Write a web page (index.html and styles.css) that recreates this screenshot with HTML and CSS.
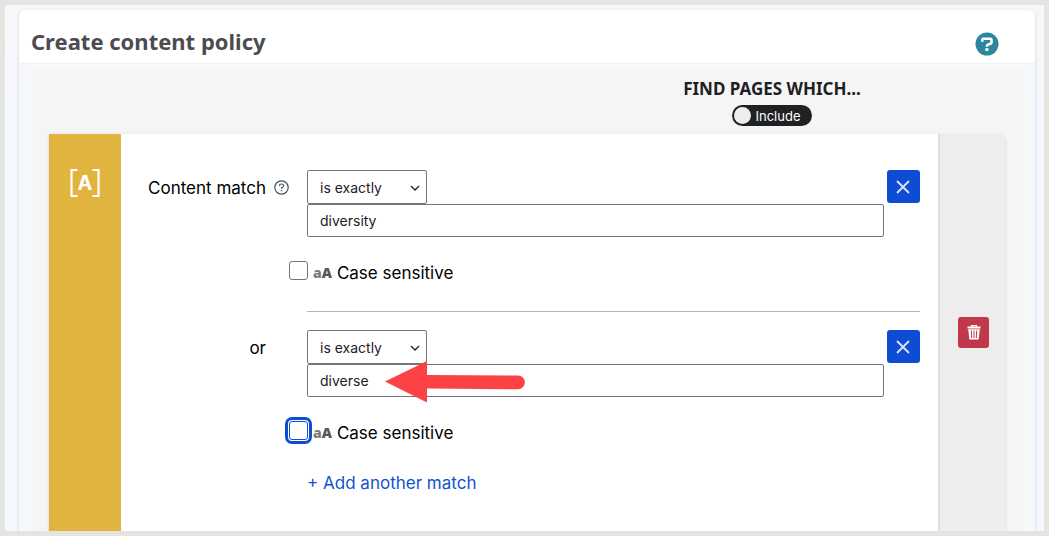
FILE: index.html
```html
<!DOCTYPE html>
<html lang="en">
  <head>
    <meta charset="UTF-8" />
    <meta name="viewport" content="width=device-width, initial-scale=1.0" />
    <title>Create content policy</title>
    <link rel="stylesheet" href="styles.css" />
  </head>
  <body>
    <main class="panel">
      <header class="panel-header">
        <h1>Create content policy</h1>
        <button class="help" type="button" aria-label="Help">
          <svg width="24" height="24" viewBox="0 0 24 24">
            <circle cx="12" cy="12" r="11.5" fill="#2b879e" />
            <path d="M7.3 9.700V7.800Q7.300 6.800 8.300 6.800H15.300Q16.500 6.800 16.500 8V10.400Q16.500 11.300 15.500 11.700L12.800 12.600Q11.900 13 11.900 14.800" fill="none" stroke="#fff" stroke-width="2.6" />
            <rect x="10.4" y="16.2" width="3" height="2.8" fill="#fff" />
          </svg>
        </button>
      </header>
      <div class="panel-body">
        <div class="rules">
          <div class="find">
            <h2>FIND PAGES WHICH...</h2>
            <button class="toggle" type="button" role="switch" aria-checked="false">
              <span class="knob"></span>Include
            </button>
          </div>
          <section class="card">
            <div class="card-type">
              <svg width="30" height="30" viewBox="0 0 30 30">
                <path d="M7.500 2H1.500V28H7.500M22.500 2H28.500V28H22.500" fill="none" stroke="#fff" stroke-width="2.2" />
                <text x="15" y="22" text-anchor="middle" class="type-letter">A</text>
              </svg>
            </div>
            <form class="matches">
              <div class="match">
                <div class="match-row">
                  <label class="match-label" for="text1">Content match</label>
                  <span class="hint">
                    <svg width="15" height="15" viewBox="0 0 15 15" fill="none" stroke="#46506a">
                      <circle cx="7.500" cy="7.500" r="6.700" stroke-width="1.200" />
                      <path d="M5.500 6Q5.500 4 7.500 4T9.500 6Q9.500 7 7.500 8V9" stroke-width="1.200" />
                      <path d="M7.500 10V11.300" stroke-width="1.300" />
                    </svg>
                  </span>
                  <div class="fields">
                    <div class="select">
                      <select aria-label="Match type">
                        <option>is exactly</option>
                        <option>contains</option>
                      </select>
                      <svg class="chevron" width="10" height="6" viewBox="0 0 10 6">
                        <path d="M1 1L5 5L9 1" fill="none" stroke="#1f2024" stroke-width="1.300" />
                      </svg>
                    </div>
                    <input id="text1" class="text" type="text" value="diversity" />
                  </div>
                  <button class="remove" type="button" aria-label="Remove match">
                    <svg width="14" height="14" viewBox="0 0 14 14">
                      <path d="M1 1L13 13M13 1L1 13" stroke="#dbe5fa" stroke-width="1.800" />
                    </svg>
                  </button>
                </div>
                <label class="case">
                  <input type="checkbox" />
                  <span class="case-icon"><span>a</span>A</span>
                  Case sensitive
                </label>
              </div>
              <hr />
              <div class="match">
                <div class="match-row">
                  <label class="match-label" for="text2">or</label>
                  <span class="hint"></span>
                  <div class="fields">
                    <div class="select">
                      <select aria-label="Match type">
                        <option>is exactly</option>
                        <option>contains</option>
                      </select>
                      <svg class="chevron" width="10" height="6" viewBox="0 0 10 6">
                        <path d="M1 1L5 5L9 1" fill="none" stroke="#1f2024" stroke-width="1.300" />
                      </svg>
                    </div>
                    <input id="text2" class="text" type="text" value="diverse" />
                    <svg class="arrow" width="141" height="42" viewBox="0 0 141 42">
                      <path d="M0 20.500L42 0V14L133 14.500A6.900 6.900 0 0 1 133 28.300L42 27.500V41.500Z" fill="#fd4245" />
                    </svg>
                  </div>
                  <button class="remove" type="button" aria-label="Remove match">
                    <svg width="14" height="14" viewBox="0 0 14 14">
                      <path d="M1 1L13 13M13 1L1 13" stroke="#dbe5fa" stroke-width="1.800" />
                    </svg>
                  </button>
                </div>
                <label class="case">
                  <input class="focused" type="checkbox" />
                  <span class="case-icon"><span>a</span>A</span>
                  Case sensitive
                </label>
              </div>
              <a class="add" href="#">+ Add another match</a>
            </form>
            <div class="card-actions">
              <button class="delete" type="button" aria-label="Delete rule">
                <svg width="14" height="15" viewBox="0 0 14 15">
                  <path d="M4.500 2V.7H9.500V2" fill="none" stroke="#fff" stroke-width="1.200" />
                  <path d="M.5 1.600H13.500V3.400H.5ZM1.200 4.300H12.800L11.600 14.500H2.400Z" fill="#fff" />
                  <path d="M4.300 5.500L4.700 13M7 5.500V13M9.700 5.500L9.300 13" stroke="#bf394b" stroke-width="1" />
                </svg>
              </button>
            </div>
          </section>
        </div>
      </div>
    </main>
  </body>
</html>
```
FILE: styles.css
```css
* {
  box-sizing: border-box;
}
body {
  display: flex;
  min-height: 100vh;
  margin: 0;
  padding: 5px 9px 0 14px;
  border: 5px solid #e6e4e1;
  background: linear-gradient(#f7f7f9, #f5f7fe 100px);
  color: #000;
  font-family: Inter, "Liberation Sans", sans-serif;
  font-size: 17px;
  line-height: 24px;
}
h1,
h2 {
  margin: 0;
  font-family: "Noto Sans", sans-serif;
}
button {
  padding: 0;
  border: 0;
  font-family: inherit;
}
svg {
  display: block;
}

.panel {
  display: flex;
  flex-direction: column;
  flex: 1;
  border-radius: 6px 6px 0 0;
  background: #f6f8fa;
  box-shadow: 0 1px 3px #c4c8d2;
  clip-path: inset(-4px -4px 0 -4px);
}
.panel-header {
  display: flex;
  align-items: center;
  justify-content: space-between;
  height: 54px;
  padding: 8px 36px 0 12px;
  border-bottom: 1px solid #f1f2f3;
  border-radius: 6px 6px 0 0;
  background: #fff;
}
.panel-header h1 {
  color: #4b4b50;
  font-size: 22px;
  line-height: 28px;
}
.help {
  margin-top: 6px;
  background: none;
}
.panel-body {
  display: flex;
  flex: 1;
  padding: 6px 12px 0;
}
.rules {
  display: flex;
  flex-direction: column;
  flex: 1;
  padding: 0 18px;
  background: #f5f5f5;
}

.find {
  display: flex;
  flex-direction: column;
  align-items: center;
  align-self: flex-end;
  width: 466px;
  height: 64px;
  padding-top: 7px;
}
.find h2 {
  color: #1f2024;
  font-size: 17px;
  line-height: 24px;
}
.toggle {
  display: flex;
  align-items: center;
  gap: 5px;
  height: 21px;
  margin-top: 4px;
  padding: 0 12px 0 2px;
  border-radius: 11px;
  background: #202125;
  color: #fff;
  font-size: 13px;
  line-height: 20px;
}
.knob {
  width: 17px;
  height: 17px;
  border-radius: 50%;
  background: #eee;
}

.card {
  display: flex;
  flex: 1;
  border-radius: 0 6px 0 0;
  background: #fff;
  box-shadow: 0 1px 3px #ccc;
}
.card-type {
  width: 72px;
  padding: 34px 0 0 21px;
  background: #e1b440;
}
.type-letter {
  fill: #fff;
  font-family: Inter, sans-serif;
  font-size: 20px;
  font-weight: 700;
}
.matches {
  flex: 1;
  padding: 36px 18px 24px 26px;
}
.match-row {
  display: flex;
}
.match-label {
  width: 119px;
  padding-top: 6px;
  text-align: right;
}
.hint {
  width: 41px;
  padding: 10px 0 0 8px;
}
.fields {
  position: relative;
  flex: 1;
  margin-right: 3px;
}
.select {
  position: relative;
  width: 120px;
}
.select select,
.text {
  display: block;
  width: 100%;
  border: 1px solid #767676;
  border-radius: 2px;
  background: #fff;
  color: #1f2024;
  font-family: inherit;
  font-size: 14px;
}
.select select {
  appearance: none;
  height: 34px;
  padding: 0 24px 0 12px;
}
.chevron {
  position: absolute;
  top: 15px;
  right: 7px;
  pointer-events: none;
}
.text {
  height: 33px;
  padding: 0 12px;
}
.arrow {
  position: absolute;
  top: 31px;
  left: 78px;
}
.remove {
  display: flex;
  align-items: center;
  justify-content: center;
  width: 33px;
  height: 33px;
  padding-right: 1px;
  border-radius: 3px;
  background: #0f4cd4;
}
.case {
  display: flex;
  align-items: center;
  width: max-content;
  margin: 24px 0 0 142px;
}
.case input {
  appearance: none;
  width: 19px;
  height: 19px;
  margin: 0 5px 5px 0;
  border: 1px solid #767676;
  border-radius: 3px;
  background: #fff;
}
.case .focused {
  border-color: #0f4cd4;
  outline: 3px solid #0f4cd4;
  outline-offset: 1px;
}
.case-icon {
  margin-right: 5px;
  color: #555;
  font-family: "Open Sans", sans-serif;
  font-size: 14px;
  font-weight: 800;
}
.case-icon span {
  color: #7d7d7d;
}
hr {
  height: 1px;
  margin: 26px 0 18px 160px;
  border: 0;
  background: #b5b5b5;
}
.add {
  display: inline-block;
  margin: 26px 0 0 160px;
  color: #1450d2;
  text-decoration: none;
}

.card-actions {
  display: flex;
  align-items: center;
  justify-content: center;
  width: 67px;
  padding-left: 2px;
  border-left: 2px solid #dedede;
  border-radius: 0 6px 0 0;
  background: #ededed;
}
.delete {
  display: flex;
  align-items: center;
  justify-content: center;
  width: 31px;
  height: 31px;
  border-radius: 3px;
  background: #bf394b;
}
```
